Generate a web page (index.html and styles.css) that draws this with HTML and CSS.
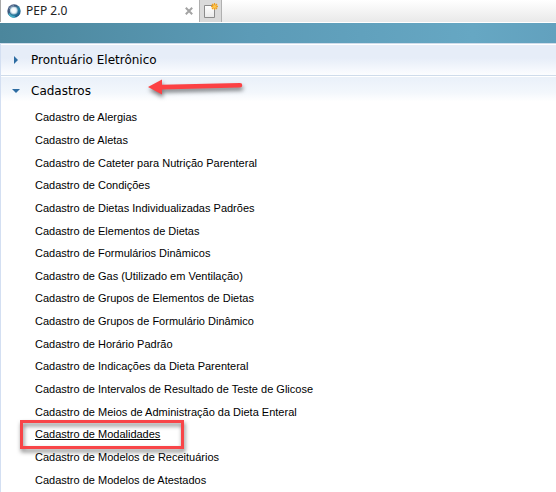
FILE: index.html
```html
<!DOCTYPE html>
<html lang="pt-BR">
<head>
<meta charset="utf-8">
<title>PEP 2.0</title>
<link rel="stylesheet" href="styles.css">
</head>
<body>
<header class="tabs">
  <div class="tab">
    <svg class="tab-icon" viewBox="0 0 14 14" aria-hidden="true">
      <defs>
        <linearGradient id="ring" x1="0" y1="0" x2="1" y2="1">
          <stop offset="0" stop-color="#5a6c90"/>
          <stop offset=".35" stop-color="#3c587c"/>
          <stop offset=".6" stop-color="#2e86a8"/>
          <stop offset="1" stop-color="#123a70"/>
        </linearGradient>
        <radialGradient id="core">
          <stop offset="0" stop-color="#ffffff"/>
          <stop offset=".6" stop-color="#eef6fa"/>
          <stop offset="1" stop-color="#8fb4c8"/>
        </radialGradient>
      </defs>
      <circle cx="7" cy="7" r="6.7" fill="url(#ring)"/>
      <path d="M2 9.5A6 6 0 0 0 8 13" fill="none" stroke="#45b0c8" stroke-width="1.6"/>
      <path d="M2 5A5.5 5.5 0 0 1 7 1.6" fill="none" stroke="#8094b0" stroke-width="1"/>
      <circle cx="6.8" cy="6.4" r="4" fill="url(#core)"/>
    </svg>
    <span class="tab-title">PEP 2.0</span>
    <button class="tab-close" type="button" aria-label="Fechar guia">
      <svg viewBox="0 0 8 8" aria-hidden="true"><path d="M.8.8l6.4 6.4M7.2.8L.8 7.2" stroke="#a3a3a3" stroke-width="2"/></svg>
    </button>
  </div>
  <button class="tab-new" type="button" aria-label="Nova guia">
    <svg viewBox="0 0 16 16" aria-hidden="true">
      <defs><linearGradient id="page" x1="0" y1="0" x2="0" y2="1"><stop offset="0" stop-color="#fff"/><stop offset="1" stop-color="#e9e9e9"/></linearGradient></defs>
      <path d="M1.5 2.5h10v12h-10z" fill="url(#page)" stroke="#8b8b8b"/>
      <path d="M11.5 0v7M8 3.500h7M9 1l5 5M14 1L9 6" stroke="#f0a020" stroke-width="1.3"/>
      <circle cx="11.500" cy="3.500" r="1.600" fill="#ffc84a"/>
    </svg>
  </button>
</header>
<div class="banner"></div>
<nav class="menu">
  <button class="section" type="button" aria-expanded="false">
    <svg class="marker" viewBox="0 0 8 8" aria-hidden="true"><path d="M2 0l4 4-4 4z" fill="#2d6ca2"/></svg>
    Prontuário Eletrônico
  </button>
  <button class="section section-open" type="button" aria-expanded="true">
    <svg class="marker" viewBox="0 0 8 8" aria-hidden="true"><path d="M0 2h8L4 6z" fill="#2d6ca2"/></svg>
    <span class="section-name">Cadastros
      <svg class="arrow" viewBox="0 0 104 30" aria-hidden="true">
        <path d="M5 12L19 4.500v5.300L97 8a2 2 0 0 1 0 4.500l-78 2v5z" fill="#fc4144"/>
      </svg>
    </span>
  </button>
  <ul class="items">
    <li><a href="#">Cadastro de Alergias</a></li>
    <li><a href="#">Cadastro de Aletas</a></li>
    <li><a href="#">Cadastro de Cateter para Nutrição Parenteral</a></li>
    <li><a href="#">Cadastro de Condições</a></li>
    <li><a href="#">Cadastro de Dietas Individualizadas Padrões</a></li>
    <li><a href="#">Cadastro de Elementos de Dietas</a></li>
    <li><a href="#">Cadastro de Formulários Dinâmicos</a></li>
    <li><a href="#">Cadastro de Gas (Utilizado em Ventilação)</a></li>
    <li><a href="#">Cadastro de Grupos de Elementos de Dietas</a></li>
    <li><a href="#">Cadastro de Grupos de Formulário Dinâmico</a></li>
    <li><a href="#">Cadastro de Horário Padrão</a></li>
    <li><a href="#">Cadastro de Indicações da Dieta Parenteral</a></li>
    <li><a href="#">Cadastro de Intervalos de Resultado de Teste de Glicose</a></li>
    <li><a href="#">Cadastro de Meios de Administração da Dieta Enteral</a></li>
    <li><a class="current" href="#">Cadastro de Modalidades</a></li>
    <li><a href="#">Cadastro de Modelos de Receituários</a></li>
    <li><a href="#">Cadastro de Modelos de Atestados</a></li>
  </ul>
</nav>
</body>
</html>
```
FILE: styles.css
```css
* { box-sizing: border-box; }

body {
  margin: 0;
  min-height: 100vh;
  display: flex;
  flex-direction: column;
  background: #fff;
  color: #000;
  font-family: "Liberation Sans", Arial, sans-serif;
}

button {
  margin: 0;
  padding: 0;
  border: 0;
  background: none;
  color: inherit;
}

svg { display: block; }

.tabs {
  display: flex;
  height: 23px;
  border-bottom: 1px solid #fff;
  background: linear-gradient(#fff, #e9e9e9);
}

.tab {
  display: flex;
  align-items: center;
  width: 199px;
  padding: 0 6px;
  border-left: 1px solid #a8a8a8;
  background: #fff;
}

.tab-icon { width: 14px; height: 14px; }

.tab-title {
  flex: 1;
  margin-left: 5px;
  font: 12px/22px "Noto Sans", sans-serif;
  color: #222;
}

.tab-close svg { width: 8px; height: 8px; }

.tab-new {
  display: grid;
  place-items: center;
  width: 23px;
  border: 1px solid #b0b0b0;
  border-width: 0 1px;
  background: #dadada;
}

.tab-new svg { width: 16px; height: 16px; }

.banner {
  height: 20px;
  background: linear-gradient(90deg, #4b869c, #5c9bb7 45%, #66a7c3 85%, #62a1be);
}

.menu {
  flex: 1;
  display: flex;
  flex-direction: column;
  border-left: 1px solid #d3dff2;
}

.section {
  display: flex;
  align-items: center;
  gap: 11px;
  height: 32px;
  padding: 0 11px;
  border-top: 1px solid #cfdceb;
  box-shadow: inset 0 1px #fff;
  background: linear-gradient(#e6edf8 45%, #fcfdff);
  font: 12px/16px "DejaVu Sans", Verdana, sans-serif;
}

.section-open {
  height: 31px;
  background: linear-gradient(#e9f0f9, #f3f7fc 55%, #fff 85%);
}

.marker { width: 8px; height: 8px; }

.section-name { position: relative; }

.arrow {
  position: absolute;
  top: -8px;
  left: 112px;
  width: 104px;
  height: 30px;
  filter: drop-shadow(1px 3px 2px rgba(0, 0, 0, .5));
}

.items {
  flex: 1;
  display: grid;
  grid-auto-rows: 1fr;
  align-items: center;
  margin: 0;
  padding: 0 34px 1px;
  list-style: none;
  font-size: 11px;
  line-height: 14px;
}

.items a {
  color: inherit;
  text-decoration: none;
}

.items .current {
  position: relative;
  text-decoration: underline;
}

/* Highlight frame around the current entry */
.current::after {
  content: "";
  position: absolute;
  inset: -8px -24px -9px -15px;
  border: 3px solid #f84548;
  filter: drop-shadow(1px 3px 2px rgba(0, 0, 0, .5));
}
```
